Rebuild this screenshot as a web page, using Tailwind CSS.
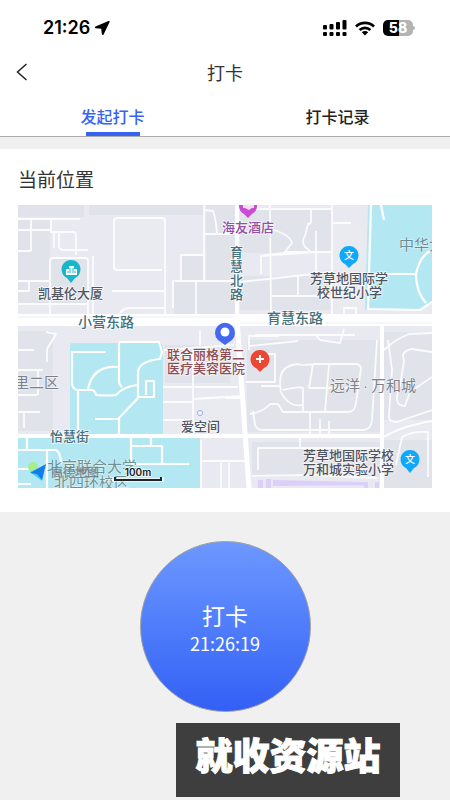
<!DOCTYPE html>
<html lang="zh-CN">
<head>
  <meta charset="UTF-8" />
  <meta name="viewport" content="width=device-width, initial-scale=1.0" />
  <title>打卡</title>
  <script src="https://cdn.jsdelivr.net/npm/@tailwindcss/browser@4"></script>
</head>
<body class="bg-[#f0f0f0] text-[#333] font-['Noto_Sans_CJK_SC',sans-serif] min-h-screen flex flex-col">
  <header class="bg-white border-b border-[#aaa]">
    <!-- status bar -->
    <div class="flex items-center justify-between h-12 pt-2 pl-[43px] pr-[35px] text-black">
      <div class="flex items-center gap-1">
        <span class="font-['Inter',sans-serif] font-semibold text-lg leading-6">21:26</span>
        <svg class="w-4 h-4" viewBox="0 0 16 16"><path d="M14.500 1 1.500 6.500c-1 .5-.8 1.500.2 1.700l5.500.6.7 5.500c.2 1 1.300 1.100 1.700.2L15.600 2c.3-.8-.4-1.300-1.100-1z" /></svg>
      </div>
      <div class="flex items-center gap-2">
        <svg class="w-6 h-4" viewBox="0 0 24 16">
          <rect x="0" y="5" width="4" height="4.500" rx="1" /><rect x="6.500" y="4" width="4" height="5.500" rx="1" />
          <rect x="13" y="2" width="4" height="7.500" rx="1" /><rect x="19.500" y="0" width="4" height="9.500" rx="1" />
          <rect x="0" y="12" width="4" height="4" rx="1" /><rect x="6.500" y="12" width="4" height="4" rx="1" />
          <rect x="13" y="12" width="4" height="4" rx="1" /><rect x="19.500" y="12" width="4" height="4" rx="1" />
        </svg>
        <svg class="w-5 h-4" viewBox="0 0 20 16" fill="none" stroke="#000" stroke-width="2.700">
          <path d="M1 6.500a12.800 12.800 0 0 1 18 0" /><path d="M4.600 10a7.800 7.800 0 0 1 10.800 0" />
          <path d="M6.800 12.200a4.600 4.600 0 0 1 6.400 0L10 15.600z" fill="#000" stroke="none" />
        </svg>
        <div class="flex items-center">
          <span class="w-[30px] h-4 rounded-[5px] bg-linear-to-r from-black from-55% to-[#b3b3b3] to-55% text-white text-center font-['Inter',sans-serif] font-extrabold text-sm leading-4">58</span>
          <span class="w-[2px] h-1 rounded-r bg-[#b3b3b3]"></span>
        </div>
      </div>
    </div>
    <!-- title bar -->
    <div class="grid grid-cols-[44px_1fr_44px] items-center h-12">
      <button type="button" aria-label="返回" class="h-12 pl-4">
        <svg class="w-3 h-[18px]" viewBox="0 0 12 18" fill="none" stroke="#222" stroke-width="1.500"><path d="M10.500 1 1.500 9l9 8" /></svg>
      </button>
      <h1 class="text-center text-lg leading-6">打卡</h1>
    </div>
    <nav class="grid grid-cols-2 h-10 text-center text-base leading-10 font-medium">
      <a href="#start" class="flex flex-col items-center justify-between text-[#3763f5]">
        <span class="h-9">发起打卡</span>
        <span class="w-[54px] h-1 bg-[#3763f5]"></span>
      </a>
      <a href="#records" class="text-[#222]">打卡记录</a>
    </nav>
  </header>

  <section class="bg-white mt-3 px-[18px] pt-4 pb-6">
    <h2 class="text-[19px] leading-7 mb-3">当前位置</h2>
    <svg class="block w-full" viewBox="18 205 414 283" role="img" aria-label="地图">
      <rect x="18" y="205" width="414" height="283" fill="#e9eaf1" />
      <!-- city blocks -->
      <g fill="#e1e3ea">
        <path d="M18 205h66v12H18zM89 205h115v10H89zM18 220h32v85H18zM51 259h36v45H51zM174 282h63v33h-63zM182 256h22v24h-22zM206 205h29v75h-29z" />
        <path d="M240 208h92v45h-92zM240 276h90v34h-90zM18 331h35v100H18zM165 345h65v38h-65zM247 340h134v92H247zM384 332h48v88h-48zM252 442h128v35H252zM384 440h48v48h-48z" />
      </g>
      <path fill="#e9ebf1" d="M116 219h48v50h-48zM334 225h32v85h-32zM198 396h46v38h-46z" />
      <!-- campus areas -->
      <g fill="#b3e8f3">
        <path d="M368 205h64v98l-14 7h-53zM72 343h88q3 0 3 6v86H70v-89q0-3 2-3zM18 438h182v50H18z" />
      </g>
      <!-- small streets -->
      <g fill="none" stroke="#fff" stroke-width="1.800" stroke-linejoin="round" stroke-opacity="0.850">
        <path d="M18 219h33v13h22q3 0 3 3v20M51 219h29M31 219v32M18 230h32M18 251h13M54 233v15M59 233v14q1 3 4 3h25M18 281h32v-20q0-3 3-3h32q3 0 3 3v58M93 256v60M18 291h11v-10M18 304h70M50 281v40" />
        <path d="M118 218h44q3 0 3 3v94M162 270h-45q-3 0-3-3v-46q0-3 4-3M112 291h53M120 313q3-5 10-5h35M204 205v75M205 210l8 1q3 8 4 23M205 234h30M181 280v-25h23M173 308v-27h64M196 281v34" />
        <path d="M240 209h92M270 205l1 110M311 208v13q0 3-3 3l-3 12q-4 5 0 11l5 4M270 229q20 5 22 14l-8 10-23 3v18M316 231v42M260 256l56-4M284 252h48M332 205v110M333 223h18M240 282l92-10M271 296h60M298 276v20M344 318v-10h12v10" />
        <path d="M18 350h16M18 370h25M18 395h19M18 412h22M24 412v16M38 370v25M46 332l10 2-9 15v13M163 387h75M163 402h30M163 420h28M193 350v86M164 350l70-5M200 330v16M193 399l50-3M249 350v-14h30M250 346l48-5" />
        <path d="M255 335h100M315 334l5 6 20 3 4-14M384 350q10-10 25-16l23-1M250 414q15-3 20-10l8 0 5 8h65q7 0 8-9l5-35q-1-4-6-4h-40q-15 2-16 0-15 1-18 11-2 10 0 15M283 390q15-4 20-2v24M313 364l-4 24h50M329 364l-4 48M280 390q8 18 23 15M246 382h29v-28h-20M261 386h20" />
        <path d="M253 411l2 14q2 5 8 5h100q8 0 9-10l5-80M310 412v26M320 419v15M329 421v15M388 340l4 30-3 45q-1 7 8 7l35-12M432 352l-20-3q-12 2-8 12l-4 25q-8 20 5 20l5-14 22-15M384 437q15-10 48-16M396 465l6-28q10-6 26-5v45" />
        <path d="M225 398h20M201 440v48M200 461h48M229 463v25M221 463v25M258 470v-22h122M300 438v10M252 476l60-1 65 3" />
      </g>
      <path fill="#dccffa" d="M273 480l92 2v3l-92 1zM258 480h5v8h-5zM266 479h5v9h-5zM364 482h4v6h-4zM375 482h4v6h-4z" />
      <!-- paths inside the campuses -->
      <g fill="none" stroke="#fff" stroke-width="2.200" stroke-linejoin="round">
        <path d="M371 205l-3 104 52 1 12-8M381 205l3 15M371 274h45M432 250q-12 5-16 24 0 18 10 29" />
        <path d="M106 352H72v32q1 5 5 6h14q4 0 5 5 12 1 20 0 8-9 22-10M119 343v38q0 4 3 6M88 389q5-24 30-22M78 391v45M119 342h40l3 10-2 7q-20 2-22 12v26h16v-16h-8v14M138 398l-19 20v18M95 419h24" />
        <path d="M27 438v12h29q5 3 5 14M18 450h12M18 469h18M47 450v38M131 438v25M131 446h31v18M151 438v9M131 464h58M18 484h13" />
      </g>
      <!-- main roads -->
      <g fill="none" stroke="#fff">
        <path stroke-width="12" d="M18 320h414" />
        <path stroke-width="4" d="M237 205v115M18 436h364M382 325v163" />
        <path stroke-width="5" d="M237 320l12 168" />
      </g>
      <path fill="none" stroke="#eceef3" stroke-width="1" d="M18 317h215M240 323h192" />

      <!-- markers -->
      <g>
        <path fill="#c94cd4" d="M239 205a9.500 9.500 0 0 0 5 9l4 4 4-4a9.500 9.500 0 0 0 5-9z" />
        <path fill="#f6dcf8" d="M243 205h11v3h-2l-3 2-4-2h-2z" />
        <path fill="#16b7ca" d="M71 283l-4-5a9.500 9.500 0 1 1 8 0z" />
        <path fill="#fff" d="M66 269h3v-3h5v3h3v6H66z" />
        <path stroke="#16b7ca" d="M70 268v5M73 268v5M68 271v2M75 271v2" />
        <path fill="#0ea9fb" d="M349 268l-4-4a9.500 9.500 0 1 1 8 0z" />
        <path fill="#0ea9fb" d="M410 473l-4-5a9.500 9.500 0 1 1 8 0z" />
        <path fill="#ec4635" d="M260 372l-4-4a9.500 9.500 0 1 1 8 0z" />
        <path stroke="#fff" stroke-width="2" d="M256 359h8M260 355v8" />
        <path fill="#4468f0" d="M225 345l-7-5a10 10 0 1 1 14 0z" />
        <circle cx="225" cy="332" r="4.500" fill="#fff" />
        <circle cx="200" cy="413" r="2.500" fill="#fff" stroke="#90a6e8" />
      </g>
      <g fill="#fff" font-size="10" font-weight="500" text-anchor="middle">
        <text x="349" y="259">文</text>
        <text x="410" y="463">文</text>
      </g>

      <!-- labels -->
      <g stroke="#fff" stroke-width="2" stroke-opacity="0.600" paint-order="stroke" stroke-linejoin="round" font-weight="500">
        <g font-size="13" fill="#50545f">
          <text x="38" y="298">凯基伦大厦</text>
          <text x="310" y="283">芳草地国际学</text>
          <text x="317" y="297">校世纪小学</text>
          <text x="181" y="431">爱空间</text>
          <text x="303" y="460">芳草地国际学校</text>
          <text x="303" y="474">万和城实验小学</text>
        </g>
        <g font-size="13" fill="#9350a6"><text x="222" y="232">海友酒店</text></g>
        <g font-size="13" fill="#8d4d52">
          <text x="167" y="359">联合丽格第二</text>
          <text x="167" y="373">医疗美容医院</text>
        </g>
        <g font-size="14" fill="#42707c">
          <text x="78" y="327">小营东路</text>
          <text x="267" y="323">育慧东路</text>
        </g>
        <g font-size="13" fill="#42707c">
          <text x="50" y="441">怡慧街</text>
          <text x="230" y="257">育</text>
          <text x="230" y="271">慧</text>
          <text x="230" y="285">北</text>
          <text x="230" y="299">路</text>
        </g>
      </g>
      <g stroke="#fff" stroke-width="1" stroke-opacity="0.600" paint-order="stroke" font-size="15" fill="#7d828a">
        <text x="14" y="388">里二区</text>
        <text x="330" y="391">远洋<tspan font-family="Liberation Sans, sans-serif" dx="3">·</tspan><tspan dx="3">万和城</tspan></text>
        <text x="399" y="250" fill="#6d8d90">中华大</text>
        <text x="47" y="472" fill="#748f92">北京联合大学</text>
        <text x="54" y="488" fill="#748f92">北四环校区</text>
      </g>
      <!-- provider logo and scale -->
      <circle cx="33" cy="467" r="5" fill="#a6ed8c" />
      <path fill="#3ccaf5" d="M30 472l15-7-3 16z" />
      <path fill="#147af0" d="M46 464l-16 9 7 1 5 6z" />
      <text x="51" y="477" font-size="12" font-weight="700" fill="#777d83" fill-opacity="0.800">高德地图</text>
      <path fill="none" stroke="#fff" stroke-opacity="0.700" stroke-width="4" d="M114 477v3h48v-3" />
      <path fill="none" stroke="#222" stroke-width="2" d="M115 477v3h46v-3" />
      <text x="138" y="476" text-anchor="middle" font-family="Inter, sans-serif" font-size="10" font-weight="600" fill="#222" stroke="#fff" stroke-width="2" stroke-opacity="0.700" paint-order="stroke">100m</text>
    </svg>
  </section>

  <main class="grow flex flex-col items-center pt-[29px]">
    <button type="button" class="w-[171px] h-[171px] rounded-full border border-[#a09f9c] bg-linear-to-b from-[#6d98ff] to-[#345ff5] text-white flex flex-col items-center justify-center">
      <span class="text-[23px] leading-8">打卡</span>
      <span class="text-lg leading-6">21:26:19</span>
    </button>
    <div class="self-end mr-[50px] mt-[11px] w-[224px] h-[74px] bg-[#3e3e3e] text-white text-center text-[37px] leading-[62px] font-black [-webkit-text-stroke:1px_white]">就收资源站</div>
  </main>
</body>
</html>
